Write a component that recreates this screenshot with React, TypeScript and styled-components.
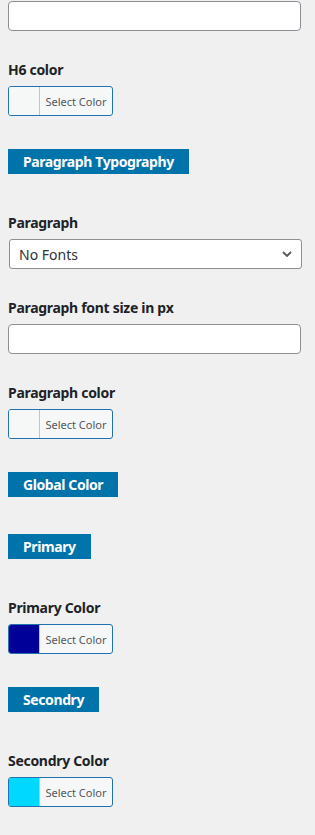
import * as React from "react";
import styled, { createGlobalStyle } from "styled-components";

const GlobalStyle = createGlobalStyle`
  html, body {
    margin: 0;
    padding: 0;
    background: #f0f0f1;
  }
  body {
    font-family: "Noto Sans", "Open Sans", sans-serif;
    color: #1d2327;
  }
`;

const Panel = styled.div`
  width: 315px;
  padding: 1px 14px 20px 8px;
  box-sizing: border-box;
  display: flex;
  flex-direction: column;
  align-items: flex-start;
`;

const Field = styled.div<{ $top: number }>`
  margin-top: ${(p) => p.$top}px;
  width: 100%;
  display: flex;
  flex-direction: column;
  align-items: flex-start;
  gap: 6px;
`;

const Label = styled.label`
  font-size: 14px;
  font-weight: 700;
  line-height: 20px;
  letter-spacing: -0.3px;
  color: #1d2327;
`;

const TextInput = styled.input`
  width: 293px;
  height: 30px;
  box-sizing: border-box;
  border: 1px solid #8c8f94;
  border-radius: 4px;
  background: #fff;
  padding: 0 8px;
  font: inherit;
  outline: none;
`;

const SelectBox = styled.div`
  position: relative;
  width: 293px;
  height: 30px;
  margin-left: 1px;
  box-sizing: border-box;
  border: 1px solid #8c8f94;
  border-radius: 3px;
  background: #fff;
  display: flex;
  align-items: center;
  justify-content: space-between;
  padding: 0 9px 0 9px;
  font-size: 14px;
  color: #2c3338;
`;

const Chevron = styled.svg`
  width: 10px;
  height: 6px;
  flex: none;
`;

const ColorButton = styled.div`
  width: 105px;
  height: 30px;
  box-sizing: border-box;
  border: 1px solid #2271b1;
  border-radius: 3px;
  display: flex;
  overflow: hidden;
  background: #f6f7f7;
`;

const Swatch = styled.span<{ $color?: string }>`
  width: 30px;
  flex: none;
  background: ${(p) => p.$color || "#f6f7f7"};
  border-right: 1px solid #c3c4c7;
`;

const SwatchText = styled.span`
  flex: 1;
  display: flex;
  align-items: center;
  justify-content: center;
  font-size: 11px;
  color: #50575e;
`;

const Badge = styled.div<{ $top: number }>`
  margin-top: ${(p) => p.$top}px;
  background: #0073aa;
  color: #fff;
  font-size: 14px;
  font-weight: 700;
  letter-spacing: -0.4px;
  line-height: 25px;
  height: 25px;
  padding: 0 15px;
`;

function ColorPicker(props: { color?: string }) {
  return (
    <ColorButton>
      <Swatch $color={props.color} />
      <SwatchText>Select Color</SwatchText>
    </ColorButton>
  );
}

export default function App() {
  return (
    <>
      <GlobalStyle />
      <Panel>
        <TextInput type="text" />

        <Field $top={29}>
          <Label>H6 color</Label>
          <ColorPicker />
        </Field>

        <Badge $top={33}>Paragraph Typography</Badge>

        <Field $top={39}>
          <Label>Paragraph</Label>
          <SelectBox>
            <span>No Fonts</span>
            <Chevron viewBox="0 0 10 6">
              <path d="M1 1l4 4 4-4" fill="none" stroke="#50575e" strokeWidth="1.8" />
            </Chevron>
          </SelectBox>
        </Field>

        <Field $top={29}>
          <Label>Paragraph font size in px</Label>
          <TextInput type="text" />
        </Field>

        <Field $top={29}>
          <Label>Paragraph color</Label>
          <ColorPicker />
        </Field>

        <Badge $top={33}>Global Color</Badge>

        <Badge $top={37}>Primary</Badge>

        <Field $top={39}>
          <Label>Primary Color</Label>
          <ColorPicker color="#000099" />
        </Field>

        <Badge $top={33}>Secondry</Badge>

        <Field $top={39}>
          <Label>Secondry Color</Label>
          <ColorPicker color="#00d8ff" />
        </Field>
      </Panel>
    </>
  );
}
